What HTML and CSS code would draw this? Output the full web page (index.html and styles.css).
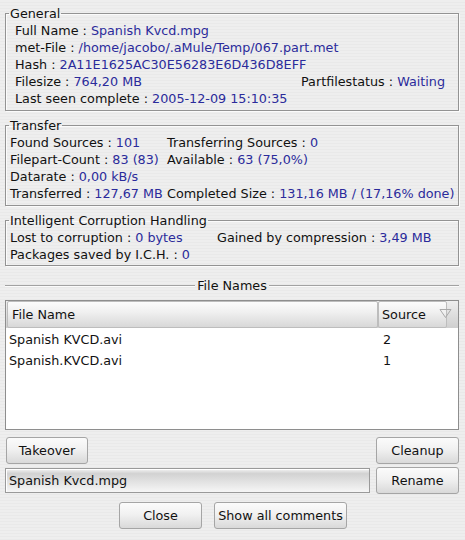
FILE: index.html
```html
<!DOCTYPE html>
<html>
<head>
<meta charset="utf-8">
<link rel="stylesheet" href="styles.css">
</head>
<body>
<div class="dialog">
  <fieldset class="frame frame-general">
    <legend>General</legend>
    <div class="content content-general">
      <div class="line">Full Name : <span class="v">Spanish Kvcd.mpg</span></div>
      <div class="line">met-File : <span class="v">/home/jacobo/.aMule/Temp/067.part.met</span></div>
      <div class="line">Hash : <span class="v">2A11E1625AC30E56283E6D436D8EFF</span></div>
      <div class="line split-general"><span>Filesize : <span class="v">764,20 MB</span></span><span>Partfilestatus : <span class="v">Waiting</span></span></div>
      <div class="line">Last seen complete : <span class="v">2005-12-09 15:10:35</span></div>
    </div>
  </fieldset>

  <fieldset class="frame frame-transfer">
    <legend>Transfer</legend>
    <div class="content grid-transfer">
      <span>Found Sources : <span class="v">101</span></span><span>Transferring Sources : <span class="v">0</span></span>
      <span>Filepart-Count : <span class="v">83 (83)</span></span><span>Available : <span class="v">63 (75,0%)</span></span>
      <span>Datarate : <span class="v">0,00 kB/s</span></span><span></span>
      <span>Transferred : <span class="v">127,67 MB</span></span><span>Completed Size : <span class="v">131,16 MB / (17,16% done)</span></span>
    </div>
  </fieldset>

  <fieldset class="frame frame-ich">
    <legend>Intelligent Corruption Handling</legend>
    <div class="content grid-ich">
      <span>Lost to corruption : <span class="v">0 bytes</span></span><span>Gained by compression : <span class="v">3,49 MB</span></span>
      <span>Packages saved by I.C.H. : <span class="v">0</span></span><span></span>
    </div>
  </fieldset>

  <div class="separator"><span class="sep-line"></span><span class="sep-label">File Names</span><span class="sep-line"></span></div>

  <div class="listbox">
    <div class="list-header">
      <div class="hcell hcell-name">File Name</div>
      <div class="hcell hcell-source">Source</div>
      <div class="hfiller"></div>
      <svg class="sort-arrow" width="13" height="11" viewBox="0 0 13 11"><path d="M1 1.5 L12 1.5 L6.5 9.5 Z" fill="none" stroke="#a9a9a9" stroke-width="1"/></svg>
    </div>
    <div class="list-body">
      <div class="list-row"><span class="c-name">Spanish KVCD.avi</span><span class="c-source">2</span></div>
      <div class="list-row"><span class="c-name">Spanish.KVCD.avi</span><span class="c-source">1</span></div>
    </div>
  </div>

  <div class="actions">
    <button class="btn btn-takeover">Takeover</button>
    <span></span>
    <button class="btn">Cleanup</button>
    <div class="entry">Spanish Kvcd.mpg</div>
    <button class="btn">Rename</button>
  </div>

  <div class="bottom-buttons">
    <button class="btn">Close</button>
    <button class="btn btn-wide">Show all comments</button>
  </div>
</div>
</body>
</html>
```

FILE: styles.css
```css
html {
  background: repeating-linear-gradient(to bottom, #eeeeee 0px, #eeeeee 2px, #e9e9e9 2px, #e9e9e9 3px);
}
body {
  margin: 0;
  width: 465px;
  height: 540px;
  overflow: hidden;
  font-family: "DejaVu Sans", "Bitstream Vera Sans", sans-serif;
  font-size: 12.75px;
  color: #111;
}
.dialog {
  padding: 5px 6px 0 5px;
  display: flex;
  flex-direction: column;
}
.frame {
  margin: 0;
  padding: 0;
  min-width: 0;
  border: 1px solid #939393;
  box-shadow: 1px 1px 0 #fbfbfb, inset 1px 1px 0 #fbfbfb;
}
.frame legend {
  margin-left: 3px;
  padding: 0 1px;
  line-height: 17px;
  color: #111;
}
.frame-transfer, .frame-ich {
  margin-top: 6px;
}
.content {
  line-height: 17px;
  white-space: nowrap;
  padding: 0 0 3px 4px;
}
.content-general {
  padding-left: 9px;
}
.frame-ich .content {
  padding-bottom: 2px;
}
.v {
  color: #2b2b9b;
}
.split-general {
  display: grid;
  grid-template-columns: 286px auto;
}
.grid-transfer {
  display: grid;
  grid-template-columns: 157px auto;
}
.grid-ich {
  display: grid;
  grid-template-columns: 207px auto;
}
.separator {
  margin-top: 11px;
  display: flex;
  align-items: center;
  height: 17px;
}
.sep-line {
  flex: 1;
  height: 0;
  border-top: 1px solid #a2a2a2;
  border-bottom: 1px solid #fbfbfb;
}
.sep-label {
  padding: 0 2px;
  line-height: 17px;
}
.listbox {
  margin-top: 6px;
  border: 1px solid #8e8e8e;
  background: #fff;
  display: flex;
  flex-direction: column;
}
.list-header {
  position: relative;
  display: flex;
  height: 27px;
  background: linear-gradient(to bottom, #eeeeee, #cfcfcf);
}
.hcell {
  box-sizing: border-box;
  height: 27px;
  line-height: 25px;
  border: 1px solid #bdbdbd;
  border-radius: 2px;
  background: linear-gradient(to bottom, #fcfcfc 0%, #f0f0f0 40%, #d8d8d8 100%);
  padding-left: 4px;
}
.hcell-name {
  flex: 1;
  margin-left: 1px;
}
.hcell-source {
  width: 69px;
  padding-left: 3px;
}
.hfiller {
  width: 11px;
}
.sort-arrow {
  position: absolute;
  right: 6px;
  top: 7px;
}
.list-body {
  height: 100px;
  padding-top: 1px;
}
.list-row {
  display: flex;
  height: 21px;
  line-height: 21px;
}
.c-name {
  width: 372px;
  padding-left: 3px;
}
.c-source {
  padding-left: 2px;
}
.actions {
  margin-top: 7px;
  display: grid;
  grid-template-columns: 83px 1fr 83px;
  grid-template-rows: 27px 27px;
  row-gap: 3px;
}
.btn {
  box-sizing: border-box;
  height: 27px;
  margin: 0;
  padding: 0;
  font-family: "DejaVu Sans", "Bitstream Vera Sans", sans-serif;
  font-size: 12.75px;
  color: #111;
  border: 1px solid #a5a5a5;
  border-radius: 3px;
  background: linear-gradient(to bottom, #fbfbfb 0%, #f1f1f1 45%, #d9d9d9 100%);
}
.btn-takeover {
  margin-left: 1px;
}
.entry {
  grid-column: 1 / 3;
  box-sizing: border-box;
  height: 25px;
  margin: 1px 6px 0 0;
  border: 1px solid #9a9a9a;
  box-shadow: inset 1px 1px 0 #ffffff;
  background: linear-gradient(to bottom, #f3f3f3 0%, #d2d2d2 20%, #f6f6f6 100%);
  line-height: 23px;
  padding-left: 3px;
  white-space: nowrap;
}
.bottom-buttons {
  margin-top: 8px;
  display: flex;
  justify-content: center;
  gap: 12px;
  padding-left: 2px;
}
.bottom-buttons .btn {
  width: 83px;
}
.bottom-buttons .btn-wide {
  width: 133px;
}
```
